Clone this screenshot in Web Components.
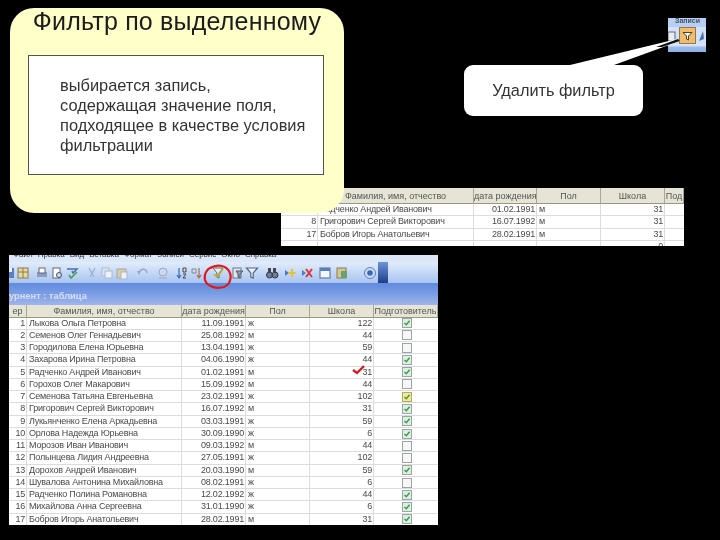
<!DOCTYPE html>
<html lang="ru"><head><meta charset="utf-8"><title>Фильтр по выделенному</title>
<style>
html,body{margin:0;background:#000;}
body{width:720px;height:540px;overflow:hidden;position:relative;font-family:"Liberation Sans",Arial,sans-serif;}
x-data-grid.small{position:absolute;left:281px;top:188px;width:403px;height:58px;}
x-access-window{position:absolute;left:9px;top:255px;width:429px;height:270px;}
x-note-card{position:absolute;left:10px;top:8px;width:334px;height:205px;}
x-button-crop{position:absolute;left:668px;top:18px;width:38px;height:34px;}
x-callout{position:absolute;left:464px;top:65px;width:179px;height:51px;}
</style></head><body>
<x-data-grid class="small" columns="37 156 63 64 64 19" hdr="|Фамилия, имя, отчество|дата рождения|Пол|Школа|Под" rows='[[5,"Радченко Андрей Иванович","01.02.1991","м",31,null],[8,"Григорович Сергей Викторович","16.07.1992","м",31,null],[17,"Бобров Игорь Анатольевич","28.02.1991","м",31,null],["",""," ","",0,null]]'></x-data-grid>
<x-access-window></x-access-window>
<x-button-crop></x-button-crop>
<x-note-card heading="Фильтр по выделенному">выбирается запись,<br>содержащая значение поля,<br>подходящее в качестве условия<br>фильтрации</x-note-card>
<x-callout>Удалить фильтр</x-callout>
<script>
class NoteCard extends HTMLElement{constructor(){super();this.attachShadow({mode:'open'}).innerHTML=`<style>
:host{display:flex;flex-direction:column;box-sizing:border-box;background:#feffc9;border-radius:24px;padding:0 20px 38px 18px;filter:blur(.45px);color:#222;}
h1{margin:0;font:400 25px/26px "Liberation Sans",Arial,sans-serif;text-align:center;height:47px;letter-spacing:.2px;color:#1c1c1c;padding-left:2px;}
.box{flex:1;background:#fff;border:1px solid #55554a;display:flex;align-items:center;padding:2px 0 0 31px;font:16.4px/19.8px "Liberation Sans",Arial,sans-serif;color:#333;}
</style><h1></h1><div class="box"><div><slot></slot></div></div>`;this.shadowRoot.querySelector('h1').textContent=this.getAttribute('heading');}}
customElements.define('x-note-card',NoteCard);

class Callout extends HTMLElement{constructor(){super();this.attachShadow({mode:'open'}).innerHTML=`<style>
:host{display:flex;align-items:center;justify-content:center;background:#fff;border-radius:9px;font:16.3px "Liberation Sans",Arial,sans-serif;color:#333;filter:blur(.45px);}
svg{position:absolute;left:100px;top:-26px;overflow:visible;}
</style><svg width="120" height="28" viewBox="0 0 120 28"><polygon points="6,26 50,26 116,2 113,0" fill="#fff"/><polygon points="92,8 114,0 116,2 98,8" fill="#111"/></svg><slot></slot>`;}}
customElements.define('x-callout',Callout);

class ButtonCrop extends HTMLElement{constructor(){super();this.attachShadow({mode:'open'}).innerHTML=`<style>
:host{display:flex;flex-direction:column;background:#b7cff2;overflow:hidden;filter:blur(.6px);}
.t{height:9px;font:bold 7px/6px "Liberation Sans",sans-serif;color:#44536c;padding-left:7px;overflow:hidden;}
.m{height:17px;display:flex;align-items:center;justify-content:space-between;background:#d3e2f8;}
.b{width:17px;height:17px;background:#f5bb68;border:1px solid #8a7a55;box-sizing:border-box;display:flex;align-items:center;justify-content:center;}
.f{flex:1;background:linear-gradient(#dbe7f9 15%,#9ab8ea 45%,#8dafe8);}
</style><div class="t">Записи</div><div class="m"><svg width="10" height="12"><rect x="0" y="2" width="7" height="9" fill="#e8eef5" stroke="#667"/></svg><div class="b"><svg width="11" height="10" viewBox="0 0 11 10"><path d="M1 1.5H10L6.5 5V9L4.5 8V5Z" fill="#fbf3d8" stroke="#444" stroke-width="1"/></svg></div><svg width="10" height="14"><path d="M3 12L7 2L8 10Z" fill="#4d6fa5"/></svg></div><div class="f"></div>`;}}
customElements.define('x-button-crop',ButtonCrop);

class DataGrid extends HTMLElement{
 constructor(){super();this.attachShadow({mode:'open'});}
 connectedCallback(){
  const cols=(this.getAttribute('columns')||'').split(' ').map(n=>n+'px').join(' ');
  const hdr=(this.getAttribute('hdr')||'').split('|');
  const rows=JSON.parse(this.getAttribute('rows')||'[]');
  const box=v=>v===null?'':`<i class="cb ${v?'on':''} ${v===2?'y':''}">${v?'<svg width="8" height="8" viewBox="0 0 8 8"><path d="M1.5 4L3.3 5.8L6.6 1.8" fill="none" stroke="#3f9a3a" stroke-width="1.4"/></svg>':''}</i>`;
  let h=hdr.map(t=>`<div class="h">${t}</div>`).join('');
  let b=rows.map(r=>`<div class="c n">${r[0]}</div><div class="c">${r[1]}</div><div class="c d">${r[2]}</div><div class="c">${r[3]}</div><div class="c d">${r[4]}</div><div class="c m">${box(r[5])}</div>`).join('');
  this.shadowRoot.innerHTML=`<style>
:host{display:block;overflow:hidden;background:#fff;filter:blur(.45px);font:9px "Liberation Sans",Arial,sans-serif;color:#4a4a4a;}
.g{display:grid;grid-template-columns:${cols};grid-template-rows:16px;grid-auto-rows:12.28px;}
:host([compact]) .g{grid-template-rows:12.5px;}
.h{background:#e6e4d4;border-right:1px solid #a9a794;border-bottom:1px solid #9a9884;box-sizing:border-box;text-align:center;white-space:nowrap;overflow:hidden;line-height:17px;color:#555;letter-spacing:0;}
:host([compact]) .h{line-height:12px;}
.c{border-right:1px solid #dcdcdc;border-bottom:1px solid #dcdcdc;box-sizing:border-box;white-space:nowrap;overflow:hidden;padding:0 1px 0 2px;line-height:11px;letter-spacing:-.2px;}
.n,.d{text-align:right;}
.m{display:flex;justify-content:center;align-items:center;border-right:0;}
.cb{display:block;width:8px;height:8px;border:1px solid #9ba5a5;background:#f7f7f7;}
.cb svg{display:block;}
.cb.on{background:#dcefe4;}
.cb.y{background:#f2e89a;border-color:#b9a860;}
</style><div class="g">${h}${b}</div>`;
 }}
customElements.define('x-data-grid',DataGrid);

class AccessWindow extends HTMLElement{
 constructor(){super();this.attachShadow({mode:'open'});}
 connectedCallback(){
  const ic={
   save:'<rect x="2" y="2" width="10" height="10" fill="#5c7fc0"/><rect x="4" y="2" width="6" height="4" fill="#eef"/>',
   table:'<rect x="2" y="2" width="10" height="10" fill="#e9d9a0" stroke="#8a7d50"/><path d="M2 6H12M7 2V12" stroke="#8a7d50"/>',
   print:'<rect x="2" y="6" width="10" height="5" fill="#8a9cc0"/><rect x="4" y="2" width="6" height="5" fill="#fff" stroke="#667"/>',
   prev:'<rect x="3" y="2" width="7" height="10" fill="#fff" stroke="#667"/><circle cx="9" cy="9" r="2.5" fill="#cde" stroke="#456"/>',
   spell:'<path d="M2 3H12L8 7L7 5" fill="none" stroke="#4a6fa5" stroke-width="1.5"/><path d="M4 9L6 12L12 6" fill="none" stroke="#4a9a50" stroke-width="1.5"/>',
   cut:'<path d="M4 2L9 11M10 2L5 11" stroke="#9fb0c8" stroke-width="1.3"/>',
   copy:'<rect x="2" y="2" width="7" height="8" fill="#dfe6f2" stroke="#a9b8cc"/><rect x="5" y="5" width="7" height="7" fill="#eef2f8" stroke="#a9b8cc"/>',
   paste:'<rect x="2" y="3" width="9" height="9" fill="#d8cda8" stroke="#a9a89c"/><rect x="6" y="6" width="6" height="7" fill="#eef2f8" stroke="#a9b8cc"/>',
   undo:'<path d="M3 7C5 2 10 2 11 7" fill="none" stroke="#9aa9c8" stroke-width="1.6"/><path d="M1 5L5 5L3 9Z" fill="#9aa9c8"/>',
   link:'<circle cx="7" cy="6" r="4" fill="#cfd8ea" stroke="#9aa9c8"/><path d="M3 12H11" stroke="#9aa9c8"/>',
   az:'<path d="M4 2V12M2 9L4 12L6 9" fill="none" stroke="#3a6ab0" stroke-width="1.2"/><path d="M8 2H11V6H8ZM8 8H11L8 12H11" fill="none" stroke="#444" stroke-width="1"/>',
   za:'<path d="M9 2V12M7 9L9 12L11 9" fill="none" stroke="#b06a5a" stroke-width="1.2"/><path d="M2 3H6V7H2Z" fill="none" stroke="#888"/>',
   fsel:'<path d="M2 2H12L8 7V12L6 11V7Z" fill="#eee" stroke="#667"/><path d="M3 8L6 11L12 3" fill="none" stroke="#b5b030" stroke-width="1.6"/>',
   fform:'<rect x="3" y="2" width="8" height="10" fill="#dde6f2" stroke="#778"/><path d="M6 5H13L10 8V12L8 11V8Z" fill="#8fa0b0" stroke="#556"/>',
   funnel:'<path d="M1.5 2H12.5L8.2 7V12L5.8 11V7Z" fill="#eef" stroke="#556a80" stroke-width="1.2"/>',
   find:'<circle cx="4.5" cy="9" r="3" fill="#6d7f9a" stroke="#334"/><circle cx="10" cy="9" r="3" fill="#6d7f9a" stroke="#334"/><rect x="3" y="2" width="3" height="5" fill="#445"/><rect x="8" y="2" width="3" height="5" fill="#445"/>',
   newr:'<path d="M2 4L6 7L2 10Z" fill="#4a7ac8"/><path d="M9 3V11M5.5 7H12.5" stroke="#e8c030" stroke-width="2"/>',
   delr:'<path d="M2 4L6 7L2 10Z" fill="#4a7ac8"/><path d="M6 3L12 11M12 3L6 11" stroke="#d83838" stroke-width="2"/>',
   db:'<rect x="2" y="2" width="10" height="10" fill="#f4f6fa" stroke="#4d6a9a"/><rect x="2" y="2" width="10" height="3" fill="#5a7fc0"/>',
   obj:'<rect x="2" y="2" width="9" height="10" fill="#d8c880" stroke="#877"/><rect x="6" y="5" width="6" height="7" fill="#68a070"/>',
   help:'<circle cx="7" cy="7" r="5.5" fill="#cfdcf2" stroke="#5a80c0"/><circle cx="7" cy="7" r="2.8" fill="#3a68b8"/>'};
  const names=['save','table','print','prev','spell','cut','copy','paste','undo','link','az','za','fsel','fform','funnel','find','newr','delr','db','obj','help'];
  const gaps=[-7,0,5,1,1,6,1,1,7,6,5,1,7,5,1,6,4,3,4,3,14];
  const icons=names.map((k,i)=>`<svg style="margin-left:${gaps[i]}px;flex:none" width="14" height="14" viewBox="0 0 14 14">${ic[k]}</svg>`).join('');
  this.shadowRoot.innerHTML=`<style>
:host{display:flex;flex-direction:column;overflow:hidden;background:#fff;font-family:"Liberation Sans",Arial,sans-serif;position:absolute;}
.menu{height:7px;background:#dbe7f8;overflow:hidden;display:flex;gap:5px;padding-left:4px;font:8px/9px "Liberation Sans",sans-serif;color:#2c3038;filter:blur(.4px);}
.menu span{margin-top:-5px;}
.bar{height:21px;background:linear-gradient(#e2edfb,#a8c4ef);display:flex;align-items:center;filter:blur(.45px);}
.bar .end{width:10px;height:21px;margin-left:1px;background:linear-gradient(#6f94da,#1c3f88);}
.title{height:22px;background:linear-gradient(#5f8ade,#7f9fe6 55%,#a0b6ea);display:flex;align-items:flex-end;padding:0 0 4px 0;font:bold 9.3px "Liberation Sans",sans-serif;color:#d5e0f5;filter:blur(.45px);box-sizing:border-box;}
x-data-grid{flex:1;display:block;}
.rc{position:absolute;left:194px;top:9px;}
.ck{position:absolute;left:343px;top:110px;}
</style>
<div class="menu"><span>Файл</span><span>Правка</span><span>Вид</span><span>Вставка</span><span>Формат</span><span>Записи</span><span>Сервис</span><span>Окно</span><span>Справка</span></div>
<div class="bar">${icons}<i class="end"></i></div>
<div class="title">урнент : таблица</div>
<x-data-grid compact columns="18 155 64 64 64 64" hdr="ер|Фамилия, имя, отчество|дата рождения|Пол|Школа|Подготовитель" id="g"></x-data-grid>
<svg class="rc" width="30" height="26" viewBox="0 0 30 26"><path d="M9 3C3 5 1 11 2 16C4 23 14 25 21 23C28 20 29 12 26 7C22 1 14 0 7 4" fill="none" stroke="#e01818" stroke-width="2.2"/></svg>
<svg class="ck" width="14" height="10" viewBox="0 0 14 10"><path d="M1 5L5 8L12 1" fill="none" stroke="#d81820" stroke-width="2.4"/></svg>`;
  const g=this.shadowRoot.getElementById('g');
  g.setAttribute('rows',JSON.stringify([
[1,"Лыкова Ольга Петровна","11.09.1991","ж",122,1],
[2,"Семенов Олег Геннадьевич","25.08.1992","м",44,0],
[3,"Городилова Елена Юрьевна","13.04.1991","ж",59,0],
[4,"Захарова Ирина Петровна","04.06.1990","ж",44,1],
[5,"Радченко Андрей Иванович","01.02.1991","м",31,1],
[6,"Горохов Олег Макарович","15.09.1992","м",44,0],
[7,"Семенова Татьяна Евгеньевна","23.02.1991","ж",102,2],
[8,"Григорович Сергей Викторович","16.07.1992","м",31,1],
[9,"Лукьянченко Елена Аркадьевна","03.03.1991","ж",59,1],
[10,"Орлова Надежда Юрьевна","30.09.1990","ж",6,1],
[11,"Морозов Иван Иванович","09.03.1992","м",44,0],
[12,"Полынцева Лидия Андреевна","27.05.1991","ж",102,0],
[13,"Дорохов Андрей Иванович","20.03.1990","м",59,1],
[14,"Шувалова Антонина Михайловна","08.02.1991","ж",6,0],
[15,"Радченко Полина Романовна","12.02.1992","ж",44,1],
[16,"Михайлова Анна Сергеевна","31.01.1990","ж",6,1],
[17,"Бобров Игорь Анатольевич","28.02.1991","м",31,1]]));
  g.connectedCallback();
 }}
customElements.define('x-access-window',AccessWindow);
</script>
</body></html>
